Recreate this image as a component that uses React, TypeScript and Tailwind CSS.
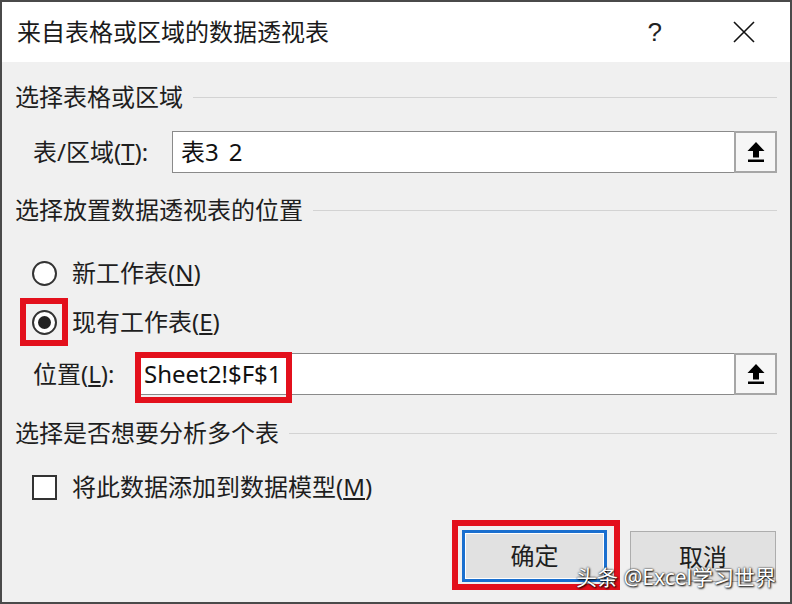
import React from "react";

const FONT = "font-['Noto_Sans','Noto_Sans_CJK_SC',sans-serif]";

function SectionHeading({ title }: { title: string }) {
  return (
    <div className="flex h-[32px] items-center">
      <span className="whitespace-nowrap text-[24px] leading-[32px] text-[#1e1e1e]">
        {title}
      </span>
      <div className="ml-[10px] h-px flex-1 bg-[#d3d3d3]" />
    </div>
  );
}

function UploadIcon() {
  return (
    <svg width="20" height="22" viewBox="0 0 20 22" aria-hidden>
      <path d="M10 1 L18.5 10 L13 10 L13 16.5 L7 16.5 L7 10 L1.5 10 Z" fill="#000" />
      <rect x="2" y="18.5" width="16" height="2.5" fill="#000" />
    </svg>
  );
}

function RefInput({
  children,
  highlight = false,
}: {
  children: React.ReactNode;
  highlight?: boolean;
}) {
  return (
    <div className="relative flex h-[42px] flex-1">
      <div className="flex flex-1 items-center border border-r-0 border-[#8a8a8a] bg-white pl-[8px] text-[24px] leading-none text-[#111]">
        {children}
      </div>
      <div className="flex w-[43px] items-center justify-center border-2 border-[#a6a6a6] bg-[#f6f6f6]">
        <UploadIcon />
      </div>
      {highlight && (
        <div className="absolute -bottom-[8px] left-0 top-[-1px] w-[157px] border-[6px] border-[#e3101c]" />
      )}
    </div>
  );
}

export default function App() {
  return (
    <div
      className={`relative flex h-[604px] w-[792px] flex-col overflow-hidden border-2 border-[#4a4a4a] bg-[#f0f0f0] text-[#1e1e1e] ${FONT}`}
    >
      {/* title bar */}
      <div className="flex h-[60px] shrink-0 items-center bg-white pl-[15px]">
        <span className="flex-1 text-[24px] leading-none text-[#1a1a1a]">
          来自表格或区域的数据透视表
        </span>
        <span className="mr-[71px] font-['Liberation_Sans',sans-serif] text-[26px] leading-none text-[#222]">
          ?
        </span>
        <svg width="22" height="22" viewBox="0 0 22 22" className="mr-[35px]" aria-hidden>
          <path d="M1 1 L21 21 M21 1 L1 21" stroke="#111" strokeWidth="1.6" />
        </svg>
      </div>

      <div className="flex flex-1 flex-col pl-[13px] pr-[13px]">
        <div className="mt-[19px]">
          <SectionHeading title="选择表格或区域" />
        </div>

        <div className="mt-[18px] flex items-center pl-[18px]">
          <span className="w-[139px] text-[24px] leading-none">
            表/区域(<u>T</u>):
          </span>
          <RefInput>
            表3<span className="ml-[10px]">2</span>
          </RefInput>
        </div>

        <div className="mt-[21px]">
          <SectionHeading title="选择放置数据透视表的位置" />
        </div>

        <div className="mt-[31px] flex h-[32px] items-center pl-[17px]">
          <span className="h-[25px] w-[25px] rounded-full border-2 border-[#333] bg-white" />
          <span className="ml-[15px] text-[24px] leading-none">
            新工作表(<u>N</u>)
          </span>
        </div>

        <div className="mt-[17px] flex h-[32px] items-center pl-[17px]">
          <span className="relative flex h-[25px] w-[25px] items-center justify-center rounded-full border-2 border-[#333] bg-white">
            <span className="h-[13px] w-[13px] rounded-full bg-[#222]" />
            <span className="absolute -left-[14px] -top-[14px] h-[48px] w-[48px] border-[6px] border-[#e3101c]" />
          </span>
          <span className="ml-[15px] text-[24px] leading-none">
            现有工作表(<u>E</u>)
          </span>
        </div>

        <div className="mt-[15px] flex items-center pl-[18px]">
          <span className="w-[102px] text-[24px] leading-none">
            位置(<u>L</u>):
          </span>
          <RefInput highlight>Sheet2!$F$1</RefInput>
        </div>

        <div className="mt-[22px]">
          <SectionHeading title="选择是否想要分析多个表" />
        </div>

        <div className="mt-[22px] flex h-[32px] items-center pl-[17px]">
          <span className="h-[25px] w-[25px] border-2 border-[#333] bg-white" />
          <span className="ml-[15px] text-[24px] leading-none">
            将此数据添加到数据模型(<u>M</u>)
          </span>
        </div>

        <div className="mt-[27px] flex justify-end gap-[23px] pr-[1px]">
          <div className="relative flex h-[52px] w-[145px] items-center justify-center border-[3px] border-[#1a6fcf] bg-[#e1e1e1] text-[24px] leading-none shadow-[inset_0_0_0_1px_#fff]">
            确定
            <span className="absolute -bottom-[11px] -left-[13px] -right-[16px] -top-[13px] border-[6px] border-[#e3101c]" />
          </div>
          <div className="flex h-[51px] w-[146px] items-center justify-center self-end border border-[#adadad] bg-[#e1e1e1] text-[24px] leading-none">
            取消
          </div>
        </div>
      </div>

      {/* watermark */}
      <span className="absolute bottom-[14px] right-[14px] whitespace-nowrap text-[21px] leading-none text-white [text-shadow:0_0_2px_#000,1px_1px_2px_#000]">
        头条 @Excel学习世界
      </span>
    </div>
  );
}
